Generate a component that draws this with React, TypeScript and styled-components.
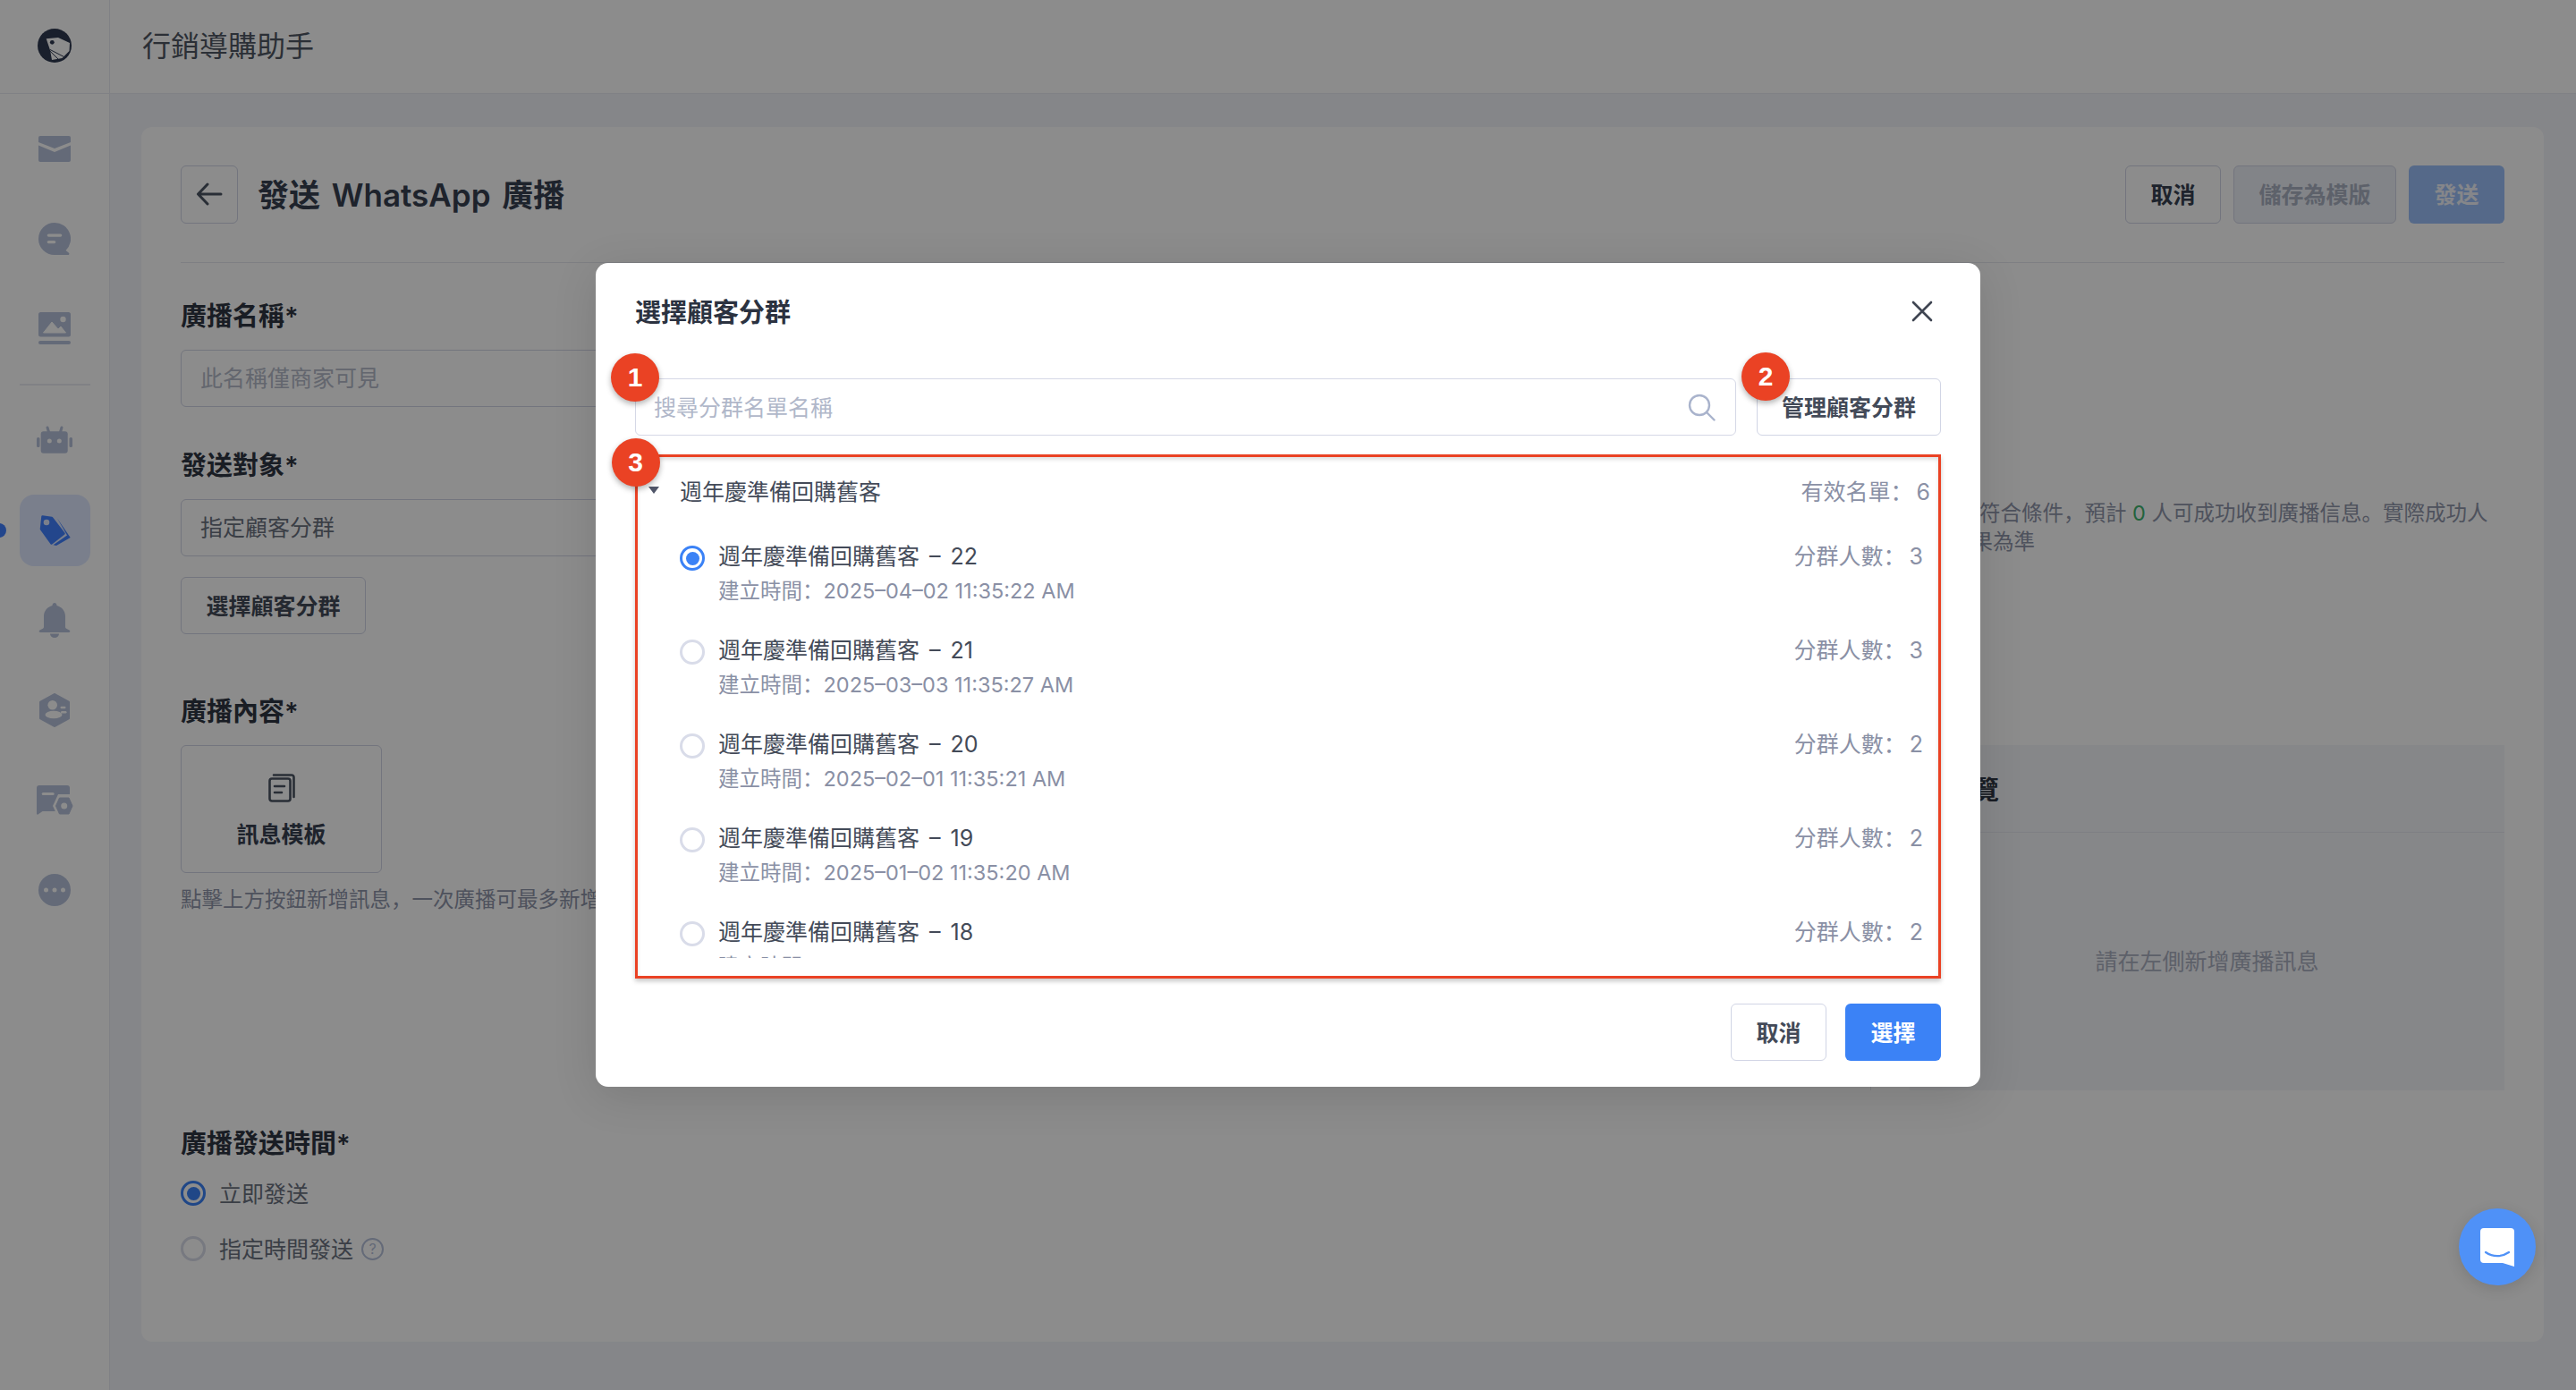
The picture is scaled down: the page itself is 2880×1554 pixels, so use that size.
import styled, { createGlobalStyle } from 'styled-components';

type segment = {
   id: number;
   date: string;
   count: number;
   selected?: boolean;
};

const segments: segment[] = [
   { id: 22, date: '2025–04–02 11:35:22 AM', count: 3, selected: true },
   { id: 21, date: '2025–03–03 11:35:27 AM', count: 3 },
   { id: 20, date: '2025–02–01 11:35:21 AM', count: 2 },
   { id: 19, date: '2025–01–02 11:35:20 AM', count: 2 },
   { id: 18, date: '2024–12–03 11:35:19 AM', count: 2 },
];

const GlobalStyle = createGlobalStyle`
   html, body {
      margin: 0;
      width: 2880px;
      height: 1554px;
      overflow: hidden;
      background: #f2f4fa;
      font-family: Inter, "Noto Sans CJK SC", "Noto Sans CJK TC", sans-serif;
   }
   * {
      box-sizing: border-box;
   }
`;

const Page = styled.div`
   position: relative;
   display: flex;
   width: 2880px;
   height: 1554px;
`;

const Sidebar = styled.nav`
   flex: 0 0 123px;
   display: flex;
   flex-direction: column;
   background: #fff;
   border-right: 1px solid #e9ebf2;
`;

const LogoCell = styled.div`
   flex: 0 0 105px;
   display: flex;
   align-items: center;
   justify-content: center;
   padding-bottom: 2px;
   border-bottom: 1px solid #e9ebf2;
`;

const NavList = styled.div`
   display: flex;
   flex-direction: column;
   align-items: center;
   gap: 20.7px;
   padding-top: 21px;
`;

const NavItem = styled.div<{ $active?: boolean }>`
   position: relative;
   width: 79px;
   height: 80px;
   display: flex;
   align-items: center;
   justify-content: center;
   border-radius: 16px;
   background: ${({ $active }) => ($active ? '#dfe8ff' : 'transparent')};
`;

const ActiveDot = styled.span`
   position: absolute;
   left: -31px;
   top: 32px;
   width: 16px;
   height: 16px;
   border-radius: 50%;
   background: #4080ff;
`;

const NavDivider = styled.div`
   width: 79px;
   height: 2px;
   margin: 0.6px 0;
   background: #e9ebf2;
`;

const Main = styled.div`
   flex: 1;
   display: flex;
   flex-direction: column;
   min-width: 0;
`;

const TopBar = styled.header`
   flex: 0 0 105px;
   display: flex;
   align-items: center;
   padding: 0 0 6px 36px;
   background: #fff;
   border-bottom: 1px solid #e9ebf2;
   font-size: 32px;
   color: #4f5663;
`;

const Content = styled.div`
   flex: 1;
   display: flex;
   padding: 37px 36px 54px 35px;
`;

const Card = styled.section`
   flex: 1;
   padding: 43px 44px 0;
   background: #fff;
   border-radius: 12px;
`;

const CardHeader = styled.div`
   display: flex;
   align-items: center;
   gap: 14px;
   height: 109px;
   padding-bottom: 44px;
   border-bottom: 1px solid #e5e7ef;
`;

const BackButton = styled.button`
   width: 64px;
   height: 65px;
   display: flex;
   align-items: center;
   justify-content: center;
   margin-right: 8px;
   padding: 0;
   background: #fff;
   border: 1px solid #d1d5e5;
   border-radius: 6px;
`;

const PageTitle = styled.h1`
   flex: 1;
   margin: 0;
   padding-bottom: 4px;
   font-size: 35px;
   font-weight: 600;
   color: #374151;
   word-spacing: 4px;
`;

const Button = styled.button<{ $variant?: 'default' | 'muted' | 'primary' | 'disabled' }>`
   height: 65px;
   padding: 0 0 2px;
   font-family: inherit;
   font-size: 25px;
   font-weight: 600;
   border-radius: 6px;
   border: 1px solid ${({ $variant }) =>
      $variant === 'primary' || $variant === 'disabled' ? 'transparent' : '#d1d5e5'};
   background: ${({ $variant }) =>
      $variant === 'primary'
         ? '#3b82f6'
         : $variant === 'disabled'
           ? '#9cc0f9'
           : $variant === 'muted'
             ? '#edf0f8'
             : '#fff'};
   color: ${({ $variant }) =>
      $variant === 'primary'
         ? '#fff'
         : $variant === 'disabled'
           ? '#f2f5fb'
           : $variant === 'muted'
             ? '#a9b1c2'
             : '#434a58'};
`;

const HeaderButton = styled(Button)<{ $width: number }>`
   width: ${({ $width }) => $width}px;
   color: ${({ $variant }) => ($variant ? undefined : '#374151')};
`;

const FieldLabel = styled.div<{ $top: number }>`
   height: 40px;
   margin: ${({ $top }) => $top}px 0 17px;
   font-size: 29px;
   line-height: 40px;
   font-weight: 600;
   color: #2f3542;
`;

const TextField = styled.div<{ $placeholder?: boolean }>`
   width: 1040px;
   height: 64px;
   display: flex;
   align-items: center;
   padding: 0 0 4px 21px;
   font-size: 25px;
   color: ${({ $placeholder }) => ($placeholder ? '#b4bac9' : '#6b7280')};
   border: 1px solid #d1d5e5;
   border-radius: 6px;
`;

const TargetRow = styled.div`
   display: flex;
   justify-content: space-between;
   align-items: flex-start;
`;

const InfoText = styled.p`
   width: 713px;
   margin: 0;
   font-size: 23.5px;
   line-height: 32px;
   text-indent: 8.5px;
   white-space: nowrap;
   color: #8f95aa;
`;

const ZeroCount = styled.span`
   color: #3fb56f;
`;

const SelectButton = styled(Button)`
   display: block;
   width: 207px;
   height: 64px;
   margin-top: 23px;
`;

const ContentRow = styled.div`
   display: flex;
   margin-top: 67px;
`;

const ComposeColumn = styled.div`
   flex: 0 0 1890px;
   border-right: 1px solid #e5e7ef;
`;

const TemplateBox = styled.div`
   width: 225px;
   height: 143px;
   display: flex;
   flex-direction: column;
   align-items: center;
   padding-top: 31px;
   gap: 18px;
   border: 1px solid #d1d5e5;
   border-radius: 6px;
   font-size: 25px;
   font-weight: 600;
   line-height: 36px;
   color: #374151;
`;

const Hint = styled.p`
   margin: 13px 0 0;
   font-size: 23.5px;
   line-height: 34px;
   white-space: nowrap;
   color: #8f95aa;
`;

const PreviewPanel = styled.aside`
   flex: 1;
   height: 386px;
   margin: 57px 0 0 43px;
   display: flex;
   flex-direction: column;
   background: #f5f6fa;
`;

const PreviewHeader = styled.div`
   flex: 0 0 98px;
   display: flex;
   align-items: center;
   padding: 0 0 2px 42px;
   font-size: 29px;
   font-weight: 600;
   color: #2f3542;
   border-bottom: 1px solid #e5e7ef;
`;

const PreviewEmpty = styled.div`
   flex: 1;
   display: flex;
   align-items: center;
   justify-content: center;
   padding-bottom: 4px;
   font-size: 25px;
   color: #a9afc0;
`;

const TimingLabel = styled(FieldLabel)`
   margin: 40px 0 15px;
`;

const RadioRow = styled.label`
   display: flex;
   align-items: center;
   gap: 15px;
   height: 40px;
   margin-bottom: 22px;
   padding-bottom: 2px;
   font-size: 25px;
   color: #6b7280;
`;

const Radio = styled.span<{ $checked?: boolean }>`
   flex: 0 0 28px;
   width: 28px;
   height: 28px;
   display: flex;
   align-items: center;
   justify-content: center;
   border-radius: 50%;
   border: 3px solid ${({ $checked }) => ($checked ? '#3b82f6' : '#d9dce9')};
   background: #fff;

   &::after {
      content: '';
      width: 15px;
      height: 15px;
      border-radius: 50%;
      background: ${({ $checked }) => ($checked ? '#3b82f6' : 'transparent')};
   }
`;

const PageRadio = styled(Radio)`
   margin-top: 2px;
`;

const HelpMark = styled.span`
   width: 25px;
   height: 25px;
   margin: 2px 0 0 -6px;
   display: flex;
   align-items: center;
   justify-content: center;
   border: 2px solid #b6c1da;
   border-radius: 50%;
   font-size: 16px;
   color: #b6c1da;
`;

const Overlay = styled.div`
   position: absolute;
   inset: 0;
   display: flex;
   justify-content: center;
   align-items: flex-start;
   padding-top: 294px;
   background: rgba(0, 0, 0, 0.45);
`;

const Modal = styled.div`
   position: relative;
   width: 1548px;
   height: 921px;
   padding: 34px 44px 0;
   background: #fff;
   border-radius: 14px;
   box-shadow: 0 10px 50px rgba(0, 0, 0, 0.12);
`;

const ModalHeader = styled.div`
   display: flex;
   align-items: center;
   justify-content: space-between;
   height: 40px;
   margin-bottom: 55px;
`;

const ModalTitle = styled.h2`
   margin: 0;
   padding-bottom: 3px;
   font-size: 29px;
   font-weight: 600;
   color: #2b3240;
`;

const CloseButton = styled.span`
   display: flex;
   margin-right: 9px;
`;

const Toolbar = styled.div`
   display: flex;
   gap: 23px;
   margin-bottom: 21px;
`;

const SearchBox = styled.div`
   flex: 1;
   height: 64px;
   display: flex;
   align-items: center;
   justify-content: space-between;
   padding: 0 22px 0 20px;
   border: 1px solid #d5d8e6;
   border-radius: 6px;
`;

const SearchPlaceholder = styled.span`
   padding-bottom: 2px;
   font-size: 25px;
   color: #b0b7c9;
`;

const ManageButton = styled(Button)`
   flex: 0 0 206px;
   height: 64px;
`;

const ListFrame = styled.div`
   height: 586px;
   padding-bottom: 20px;
   border: 3.5px solid #ea4224;
   box-shadow:
      0 3px 5px rgba(0, 0, 0, 0.22),
      inset 0 3px 4px rgba(0, 0, 0, 0.12);
`;

const ListScroll = styled.div`
   height: 100%;
   overflow: hidden;
`;

const GroupRow = styled.div`
   height: 76px;
   display: flex;
   align-items: center;
   padding: 0 9px 3px 12px;
   font-size: 25px;
   color: #434a58;
`;

const Caret = styled.span`
   width: 0;
   height: 0;
   margin: 1px 23px 0 0;
   border-left: 6px solid transparent;
   border-right: 6px solid transparent;
   border-top: 8px solid #505669;
`;

const RowCount = styled.span`
   margin-left: auto;
   font-size: 25px;
   white-space: pre;
   word-spacing: -3px;
   color: #8a90a5;
`;

const SegmentRow = styled.div`
   display: flex;
   align-items: flex-start;
   gap: 15px;
   height: 105px;
   padding: 17px 17px 0 47px;
`;

const SegmentRadio = styled(Radio)`
   margin-top: 6px;
`;

const SegmentText = styled.div`
   display: flex;
   flex-direction: column;
   gap: 4px;
`;

const SegmentName = styled.div`
   font-size: 25px;
   line-height: 36px;
   word-spacing: 4px;
   color: #434a58;
`;

const SegmentDate = styled.div`
   font-size: 23.5px;
   line-height: 34px;
   color: #8a90a5;
`;

const SegmentCount = styled(RowCount)`
   line-height: 36px;
`;

const Footer = styled.div`
   display: flex;
   justify-content: flex-end;
   gap: 21px;
   margin-top: 28px;
`;

const FooterButton = styled(Button)`
   width: 107px;
   height: 64px;
`;

const Badge = styled.span<{ $x: number; $y: number }>`
   position: absolute;
   left: ${({ $x }) => $x}px;
   top: ${({ $y }) => $y}px;
   width: 54px;
   height: 54px;
   display: flex;
   align-items: center;
   justify-content: center;
   transform: translate(-50%, -50%);
   border-radius: 50%;
   background: #ea4224;
   box-shadow: 0 3px 6px rgba(0, 0, 0, 0.3);
   font-family: 'Liberation Sans', sans-serif;
   font-size: 30px;
   font-weight: 700;
   color: #fff;
`;

const Fab = styled.div`
   position: absolute;
   left: 2749px;
   top: 1351px;
   width: 86px;
   height: 86px;
   display: flex;
   align-items: center;
   justify-content: center;
   border-radius: 50%;
   background: #4f91f7;
   box-shadow: 0 4px 16px rgba(0, 0, 0, 0.12);
`;

const ICON = '#b6c1da';

const Logo = () => (
   <svg width="38" height="38" viewBox="0 0 38 38">
      <circle cx="19" cy="19" r="19" fill="#2f3950" />
      <path d="M9.7 11.3 23 10l13 6-.5 9-8 8-11.500 2L14 24z" fill="#fff" />
      <circle cx="16.300" cy="15.300" r="2.400" fill="#2f3950" />
      <path d="M14 23.500 29.500 31.500M13.800 25 23.500 34.500" stroke="#2f3950" strokeWidth="1" fill="none" />
   </svg>
);

const MailIcon = () => (
   <svg width="36" height="29" viewBox="0 0 36 29" fill={ICON}>
      <path d="M2 0h32a2 2 0 0 1 2 2v5l-18 7L0 7V2a2 2 0 0 1 2-2z" />
      <path d="M0 10.500 18 18l18-7.500V27a2 2 0 0 1-2 2H2a2 2 0 0 1-2-2z" />
   </svg>
);

const ChatIcon = () => (
   <svg width="36" height="36" viewBox="0 0 36 36" fill={ICON}>
      <path d="M18 0a18 18 0 0 1 12.500 31l3.500 2.800c.8.800.3 2.200-.8 2.200H18a18 18 0 0 1 0-36z" />
      <rect x="9.700" y="12.500" width="16.600" height="3.200" rx="1.600" fill="#fff" />
      <rect x="9.700" y="20" width="9.600" height="3.200" rx="1.600" fill="#fff" />
   </svg>
);

const ImageIcon = () => (
   <svg width="36" height="36" viewBox="0 0 36 36" fill={ICON}>
      <rect width="36" height="27.500" rx="2.500" />
      <rect y="32" width="36" height="4" rx="2" />
      <circle cx="27.500" cy="8" r="3.200" fill="#fff" />
      <path d="M5.500 23 15 11l7 8 3-3 5.500 7z" fill="#fff" stroke="#fff" strokeLinejoin="round" />
   </svg>
);

const RobotIcon = () => (
   <svg width="40" height="31" viewBox="0 0 40 31" fill={ICON}>
      <path d="M12 2 13.500 7M28 2 26.500 7" stroke={ICON} strokeWidth="3" strokeLinecap="round" />
      <rect x="4.700" y="6.300" width="30" height="24.500" rx="3" />
      <rect y="13" width="3.500" height="11" rx="1.500" />
      <rect x="36.500" y="13" width="3.500" height="11" rx="1.500" />
      <circle cx="14.300" cy="17" r="2.500" fill="#fff" />
      <circle cx="25.300" cy="17" r="2.500" fill="#fff" />
   </svg>
);

const TagIcon = () => (
   <svg width="35" height="34" viewBox="0 0 35 34" fill="#4080ff">
      <path d="M20 3.500 34.700 25 19 34l-3.500-.8L31 22.500z" />
      <path
         d="M3.500 1.500 14 3l13.500 17.500-14 11L2 15.500z"
         stroke="#4080ff"
         strokeWidth="2.500"
         strokeLinejoin="round"
      />
      <circle cx="8" cy="8" r="3.300" fill="#dfe8ff" />
   </svg>
);

const BellIcon = () => (
   <svg width="36" height="39" viewBox="0 0 36 39" fill={ICON}>
      <path d="M18 0a2.500 2.500 0 0 1 2.400 3C26 4.500 30 9 30 15v12c0 1.500 1.500 2 4.500 3.500 1.500 1 1 2.500-1 2.500H2.500c-2 0-2.500-1.500-1-2.500C4.500 29 6 28.500 6 27V15c0-6 4-10.500 9.600-12A2.500 2.500 0 0 1 18 0z" />
      <path d="M13 34.500h10a5 4.500 0 0 1-10 0z" />
   </svg>
);

const HexUserIcon = () => (
   <svg width="34" height="38" viewBox="0 0 34 38" fill={ICON}>
      <path
         d="M17 1.500 32.500 10v18L17 36.500 1.500 28V10z"
         stroke={ICON}
         strokeWidth="3"
         strokeLinejoin="round"
      />
      <circle cx="14.700" cy="13.300" r="5.300" fill="#fff" />
      <ellipse cx="16" cy="24" rx="9.500" ry="4.300" fill="#fff" />
      <rect x="23.500" y="14.800" width="6" height="2.500" rx="1.200" fill="#fff" />
      <rect x="24" y="20" width="6.500" height="2.500" rx="1.200" fill="#fff" />
   </svg>
);

const CardGearIcon = () => (
   <svg width="40" height="33" viewBox="0 0 40 33" fill={ICON} overflow="visible">
      <path d="M3 0h31a3 3 0 0 1 3 3v26H6.500L1.500 32.500C.8 33 0 32.500 0 31.500V3a3 3 0 0 1 3-3z" />
      <rect x="5.700" y="8" width="14" height="3" rx="1.500" fill="#fff" />
      <path d="M24 10h13.500l6 13-6 13H24l-6-13z" fill="#fff" />
      <path d="M25.500 14h10.500l4 9-4 9H25.500l-4-9z" stroke={ICON} strokeWidth="1" strokeLinejoin="round" />
      <circle cx="30.700" cy="23" r="3.500" fill="#fff" />
   </svg>
);

const MoreIcon = () => (
   <svg width="36" height="36" viewBox="0 0 36 36" fill={ICON}>
      <circle cx="18" cy="18" r="18" />
      <circle cx="8.500" cy="18" r="2.500" fill="#fff" />
      <circle cx="18" cy="18" r="2.500" fill="#fff" />
      <circle cx="27.500" cy="18" r="2.500" fill="#fff" />
   </svg>
);

const BackIcon = () => (
   <svg width="30" height="26" viewBox="0 0 30 26" fill="none" stroke="#4b5563" strokeWidth="3" strokeLinecap="round" strokeLinejoin="round">
      <path d="M28 13H3M13 2 2.500 13 13 24" />
   </svg>
);

const TemplateIcon = () => (
   <svg width="30" height="32" viewBox="0 0 30 32" fill="none" stroke="#4b5563" strokeWidth="2.600" strokeLinecap="round" strokeLinejoin="round">
      <rect x="1.500" y="5.500" width="23" height="25" rx="2.500" />
      <path d="M6 1.500h20a2.500 2.500 0 0 1 2.500 2.500v22" />
      <path d="M7 14h11M7 21h8" />
   </svg>
);

const CloseIcon = () => (
   <svg width="24" height="24" viewBox="0 0 24 24" fill="none" stroke="#3f4552" strokeWidth="2.600" strokeLinecap="round">
      <path d="M2 2l20 20M22 2 2 22" />
   </svg>
);

const SearchIcon = () => (
   <svg width="31" height="31" viewBox="0 0 31 31" fill="none" stroke="#a9b3cc" strokeWidth="2.400" strokeLinecap="round">
      <circle cx="13" cy="13" r="11" />
      <path d="M21 21l8.500 8.500" />
   </svg>
);

const MessengerIcon = () => (
   <svg width="38" height="43" viewBox="0 0 38 43">
      <path d="M4 0h30a4 4 0 0 1 4 4v39l-13-4H4a4 4 0 0 1-4-4V4a4 4 0 0 1 4-4z" fill="#fff" />
      <path d="M6 27c8 5.500 18 5.500 26 0" fill="none" stroke="#4f91f7" strokeWidth="2.200" strokeLinecap="round" />
   </svg>
);

const App: React.FC = () => {
   return (
      <Page>
         <GlobalStyle />
         <Sidebar>
            <LogoCell>
               <Logo />
            </LogoCell>
            <NavList>
               <NavItem>
                  <MailIcon />
               </NavItem>
               <NavItem>
                  <ChatIcon />
               </NavItem>
               <NavItem>
                  <ImageIcon />
               </NavItem>
               <NavDivider />
               <NavItem>
                  <RobotIcon />
               </NavItem>
               <NavItem $active>
                  <ActiveDot />
                  <TagIcon />
               </NavItem>
               <NavItem>
                  <BellIcon />
               </NavItem>
               <NavItem>
                  <HexUserIcon />
               </NavItem>
               <NavItem>
                  <CardGearIcon />
               </NavItem>
               <NavItem>
                  <MoreIcon />
               </NavItem>
            </NavList>
         </Sidebar>
         <Main>
            <TopBar>行銷導購助手</TopBar>
            <Content>
               <Card>
                  <CardHeader>
                     <BackButton>
                        <BackIcon />
                     </BackButton>
                     <PageTitle>發送 WhatsApp 廣播</PageTitle>
                     <HeaderButton $width={107}>取消</HeaderButton>
                     <HeaderButton $width={182} $variant="muted">
                        儲存為模版
                     </HeaderButton>
                     <HeaderButton $width={107} $variant="disabled">
                        發送
                     </HeaderButton>
                  </CardHeader>
                  <FieldLabel $top={40}>廣播名稱*</FieldLabel>
                  <TextField $placeholder>此名稱僅商家可見</TextField>
                  <FieldLabel $top={46}>發送對象*</FieldLabel>
                  <TargetRow>
                     <TextField>指定顧客分群</TextField>
                     <InfoText>
                        目前分群中符合條件，預計 <ZeroCount>0</ZeroCount> 人可成功收到廣播信息。實際成功人
                        <br />
                        數以發送結果為準
                     </InfoText>
                  </TargetRow>
                  <SelectButton>選擇顧客分群</SelectButton>
                  <ContentRow>
                     <ComposeColumn>
                        <FieldLabel $top={0}>廣播內容*</FieldLabel>
                        <TemplateBox>
                           <TemplateIcon />
                           訊息模板
                        </TemplateBox>
                        <Hint>點擊上方按鈕新增訊息，一次廣播可最多新增 5 則訊息</Hint>
                     </ComposeColumn>
                     <PreviewPanel>
                        <PreviewHeader>預覽</PreviewHeader>
                        <PreviewEmpty>請在左側新增廣播訊息</PreviewEmpty>
                     </PreviewPanel>
                  </ContentRow>
                  <TimingLabel $top={40}>廣播發送時間*</TimingLabel>
                  <RadioRow>
                     <PageRadio $checked />
                     立即發送
                  </RadioRow>
                  <RadioRow>
                     <PageRadio />
                     指定時間發送
                     <HelpMark>?</HelpMark>
                  </RadioRow>
               </Card>
            </Content>
         </Main>
         <Overlay>
            <Modal>
               <ModalHeader>
                  <ModalTitle>選擇顧客分群</ModalTitle>
                  <CloseButton>
                     <CloseIcon />
                  </CloseButton>
               </ModalHeader>
               <Toolbar>
                  <SearchBox>
                     <SearchPlaceholder>搜尋分群名單名稱</SearchPlaceholder>
                     <SearchIcon />
                  </SearchBox>
                  <ManageButton>管理顧客分群</ManageButton>
               </Toolbar>
               <ListFrame>
                  <ListScroll>
                     <GroupRow>
                        <Caret />
                        週年慶準備回購舊客
                        <RowCount>有效名單： 6</RowCount>
                     </GroupRow>
                     {segments.map((el) => (
                        <SegmentRow key={el.id}>
                           <SegmentRadio $checked={el.selected} />
                           <SegmentText>
                              <SegmentName>週年慶準備回購舊客 – {el.id}</SegmentName>
                              <SegmentDate>建立時間：{el.date}</SegmentDate>
                           </SegmentText>
                           <SegmentCount>分群人數： {el.count}</SegmentCount>
                        </SegmentRow>
                     ))}
                  </ListScroll>
               </ListFrame>
               <Footer>
                  <FooterButton>取消</FooterButton>
                  <FooterButton $variant="primary">選擇</FooterButton>
               </Footer>
               <Badge $x={44} $y={128}>
                  1
               </Badge>
               <Badge $x={1308} $y={127}>
                  2
               </Badge>
               <Badge $x={44.5} $y={223}>
                  3
               </Badge>
            </Modal>
         </Overlay>
         <Fab>
            <MessengerIcon />
         </Fab>
      </Page>
   );
};

export default App;
